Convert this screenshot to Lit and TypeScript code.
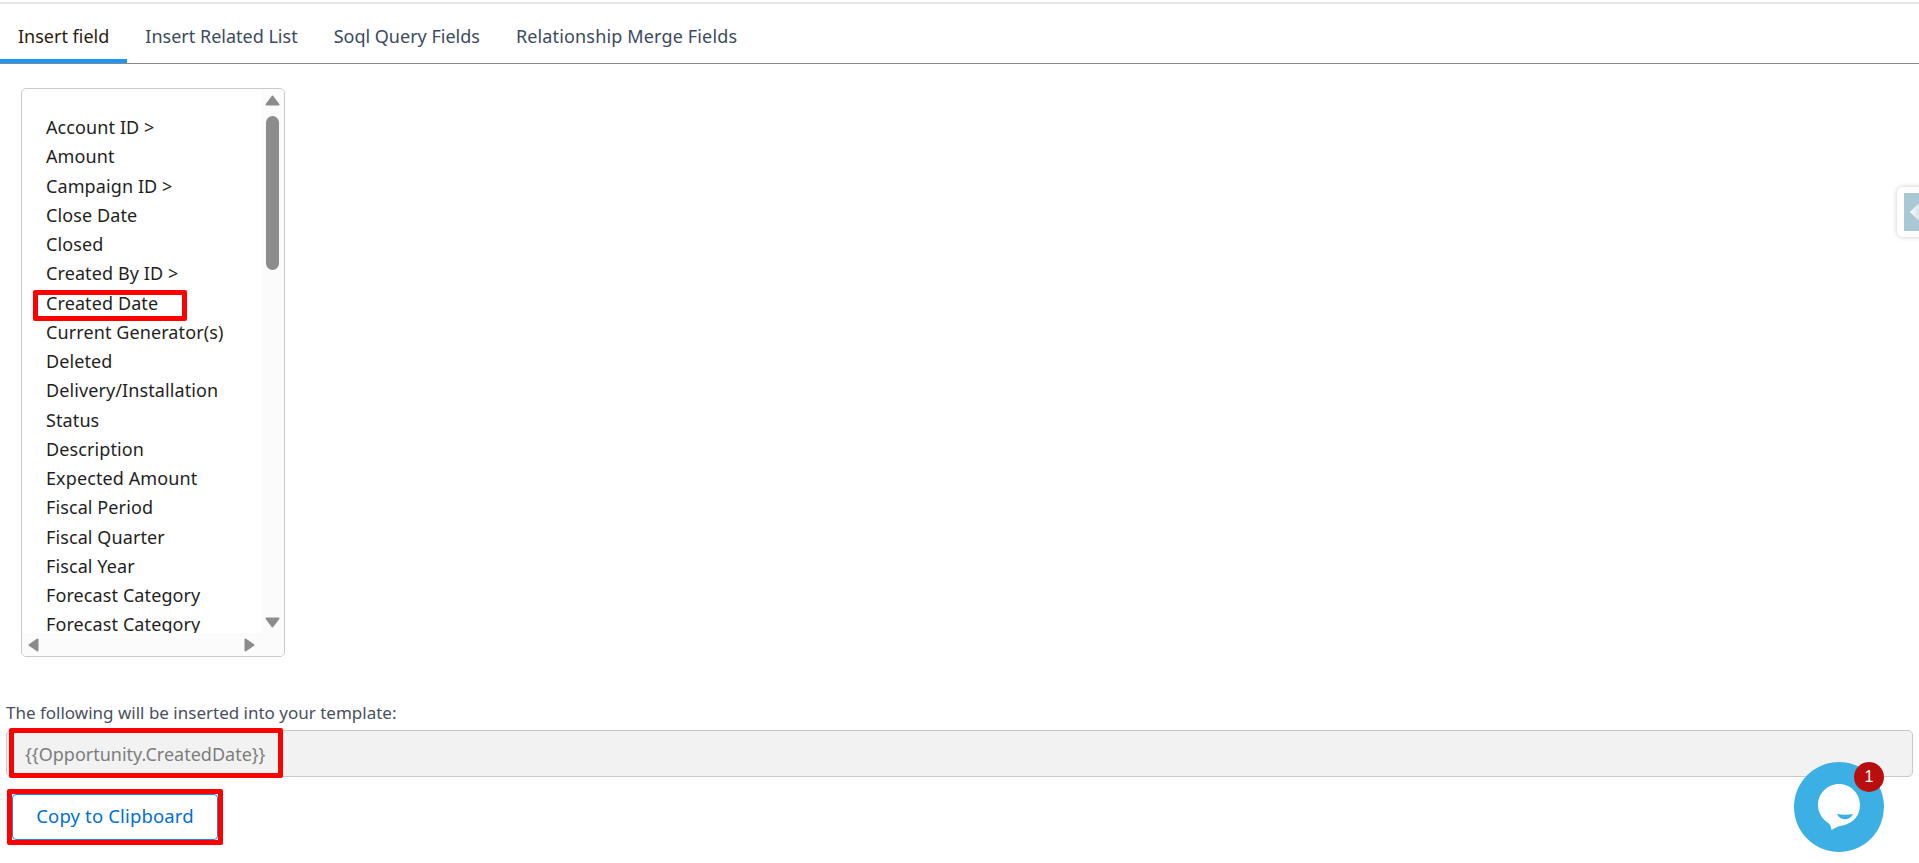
import { LitElement, html, css } from "lit";
import { customElement } from "lit/decorators.js";

const FIELDS = ["Account ID >","Amount","Campaign ID >","Close Date","Closed","Created By ID >","Created Date","Current Generator(s)","Deleted","Delivery/Installation","Status","Description","Expected Amount","Fiscal Period","Fiscal Quarter","Fiscal Year","Forecast Category","Forecast Category"];
const TABS = ["Insert field","Insert Related List","Soql Query Fields","Relationship Merge Fields"];

@customElement("app-root")
export class AppRoot extends LitElement {
  static styles = css`
    :host { display: block; height: 863px; overflow: hidden; position: relative; background: #fff; font-family: "Noto Sans", "Open Sans", sans-serif; color: #1f1f1f; }
    .topline { height: 2px; margin-top: 2px; background: #e6e6e6; }
    .tabs { display: flex; height: 59.5px; box-sizing: border-box; border-bottom: 1px solid #8a8a8a; }
    .tab { height: 59px; box-sizing: border-box; padding: 0 18px; font-size: 18px; line-height: 64px; color: #3c4a5e; white-space: nowrap; }
    .tab:last-child { letter-spacing: 0.15px; }
    .tab.active { color: #2b1c0c; border-bottom: 4px solid #1b96ff; }
    .listbox { margin: 24.5px 0 0 21px; width: 264px; height: 569px; box-sizing: border-box; border: 1px solid #c9c9c9; border-radius: 5px; display: grid; grid-template-columns: minmax(0, 1fr) 22px; grid-template-rows: minmax(0, 1fr) 23px; overflow: hidden; }
    .items { overflow: hidden; margin: 0; padding: 24px 0 0 24px; list-style: none; font-size: 18px; line-height: 29.25px; letter-spacing: 0.1px; white-space: nowrap; min-height: 0; }
    .vbar { background: #fbfbfb; grid-row: 1 / 3; grid-column: 2; display: flex; flex-direction: column; align-items: center; padding: 6px 1px 0 0; box-sizing: border-box; }
    .vbar svg, .hbar svg { display: block; flex: none; }
    .thumb { width: 13px; height: 154px; border-radius: 7px; background: #8c8c8c; margin-top: 10px; flex: none; }
    .down { margin-top: 347px; }
    .hbar { background: #fbfbfb; display: flex; justify-content: space-between; align-items: center; padding: 0 7px 0 6px; }
    .label { margin: 44px 0 0 6px; font-size: 17px; line-height: 24px; color: #4a4f5c; }
    .input { margin: 5px 6px 0 6px; height: 47px; box-sizing: border-box; border: 1px solid #c9c9c9; border-radius: 5px; background: #f2f2f2; padding-left: 18px; font-size: 18px; line-height: 47px; color: #7d7d7d; }
    .btn { display: block; margin: 17px 0 0 12px; width: 206px; height: 46px; box-sizing: border-box; border: 1px solid #1589ee; border-radius: 4px; background: #fff; font: inherit; font-size: 18.5px; letter-spacing: 0.15px; color: #0070d2; padding: 0 0 3px; }
    .red { position: absolute; box-sizing: border-box; border: 5px solid #ff0000; border-radius: 2px; pointer-events: none; }
    .r1 { left: 33px; top: 290px; width: 154px; height: 31px; }
    .r2 { left: 9px; top: 728px; width: 274px; height: 50px; }
    .r3 { left: 7px; top: 789px; width: 216px; height: 56px; }
    .side { position: absolute; left: 1897px; top: 187px; width: 30px; height: 50px; box-sizing: border-box; background: #fff; border-radius: 6px 0 0 6px; box-shadow: 0 0 5px rgba(0,0,0,.22); padding: 6px 0 6px 7px; }
    .side svg { display: block; }
    .chat { position: absolute; left: 1794px; top: 762px; width: 90px; height: 90px; border-radius: 50%; background: #3cb0e4; }
    .chat svg { display: block; }
    .badge { position: absolute; left: 60px; top: 0; width: 30px; height: 30px; border-radius: 50%; background: #b80e0e; color: #fff; font-family: "Liberation Sans", sans-serif; font-size: 16px; line-height: 30px; text-align: center; }
  `;

  render() {
    return html`
      <div class="topline"></div>
      <nav class="tabs">
        ${TABS.map((t, i) => html`<div class="tab ${i === 0 ? "active" : ""}">${t}</div>`)}
      </nav>
      <div class="listbox">
        <ul class="items">${FIELDS.map((f) => html`<li>${f}</li>`)}</ul>
        <div class="vbar">
          <svg width="15" height="11" viewBox="0 0 15 11"><path d="M7.5 1.5 L13.5 9.5 H1.5 Z" fill="#8c8c8c" stroke="#8c8c8c" stroke-width="2" stroke-linejoin="round"/></svg>
          <div class="thumb"></div>
          <svg class="down" width="15" height="11" viewBox="0 0 15 11"><path d="M1.5 1.5 H13.5 L7.5 9.5 Z" fill="#8c8c8c" stroke="#8c8c8c" stroke-width="2" stroke-linejoin="round"/></svg>
        </div>
        <div class="hbar">
          <svg width="11" height="14" viewBox="0 0 11 14"><path d="M1.5 7 L9.5 1.5 V12.5 Z" fill="#8c8c8c" stroke="#8c8c8c" stroke-width="2" stroke-linejoin="round"/></svg>
          <svg width="11" height="14" viewBox="0 0 11 14"><path d="M1.5 1.5 L9.5 7 L1.5 12.5 Z" fill="#8c8c8c" stroke="#8c8c8c" stroke-width="2" stroke-linejoin="round"/></svg>
        </div>
      </div>
      <div class="label">The following will be inserted into your template:</div>
      <div class="input">{{Opportunity.CreatedDate}}</div>
      <button class="btn">Copy to Clipboard</button>
      <div class="red r1"></div>
      <div class="red r2"></div>
      <div class="red r3"></div>
      <div class="side">
        <svg width="15" height="38" viewBox="0 0 15 38"><defs><linearGradient id="g" x1="0" x2="1" y1="0" y2="0"><stop offset="0" stop-color="#ffffff"/><stop offset="1" stop-color="#d5e3ea"/></linearGradient></defs><rect width="15" height="38" fill="#a9c8d6"/><path d="M6 19 L15 10 V28 Z" fill="url(#g)"/></svg>
      </div>
      <div class="chat">
        <svg width="90" height="90" viewBox="0 0 90 90">
          <path d="M45 22 C33.5 22 24 31.5 24 43 C24 50 27.5 56 33 60 C36 62 37 64 37.5 68 L44 64.5 C47 64 52 63 57 60 C63 56 66 50 66 43 C66 31.5 56.5 22 45 22 Z" fill="#fff"/>
          <path d="M43 52 C48 53 54 53 59 52 C56 59 46 59 43 52 Z" fill="#3cb0e4"/>
        </svg>
        <div class="badge">1</div>
      </div>
    `;
  }
}
